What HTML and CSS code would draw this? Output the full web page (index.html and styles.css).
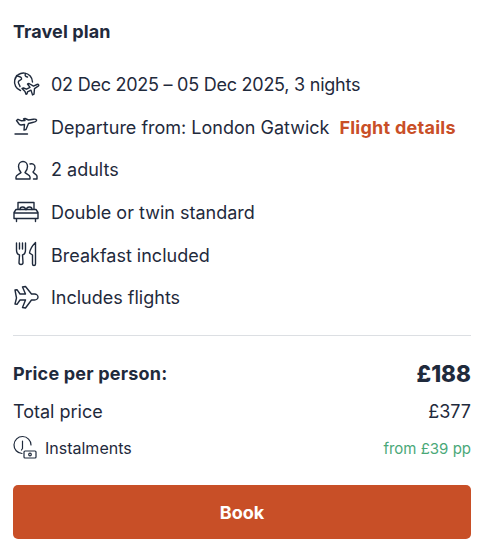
FILE: index.html
```html
<!DOCTYPE html>
<html lang="en">
<head>
<meta charset="utf-8">
<title>Travel plan</title>
<link rel="stylesheet" href="styles.css">
</head>
<body>
<main class="card">
  <h2 class="title">Travel plan</h2>
  <ul class="facts">
    <li class="fact fact-date">
      <svg class="icon" viewBox="0 0 32 32"><path d="M10.500 21.500A9 9 0 1 1 22.500 13"/><path d="M6.500 6.500c2 1.500 4 .5 5 2.500s-2 2-3 3.500 1 3 1.500 5M15.500 4.500c-1 2 0 3 2 3.500"/><path d="M12 19.500l1.500-.5 3 1.200 3.500-1.800-2.500-3.400 1.500-.5 4.500 2.600 3.500-1.600c1.500-.6 2.500.8 1.200 1.700l-3.700 2.400-.5 5.500-1.500.8-1.500-4.800-3.500 1.800-.5 2-1 .4-1-2.800z"/></svg>
      <span>02 Dec 2025 – 05 Dec 2025, 3 nights</span>
    </li>
    <li class="fact">
      <svg class="icon" viewBox="0 0 32 32"><path d="M5 23h12.500"/><path d="M6.500 9.500L8 8.300l3.500 1.500 3.500-.3-1.500-1.500 1.500-.5 3.500 1.500 5-.8c2-.3 3.500.5 3 1.500s-2.500 1.500-4 1.800l-4 1-2.500 6-2 .5.500-5.500-3.500.5c-1 0-1.500-.5-2-1z"/></svg>
      <span>Departure from: London Gatwick</span>
      <a class="link" href="#">Flight details</a>
    </li>
    <li class="fact">
      <svg class="icon" viewBox="0 0 32 32"><path d="M6 25v-2c0-2 4-3 5-4.500-1.500-1.500-2.500-3.500-2.500-6 0-3 2-5 4.500-5s4.500 2 4.500 5c0 2.500-1 4.500-2.500 6 1 1.500 5 2.500 5 4.500v2z"/><path d="M20 10c2.500-1 5 .5 5 3.500 0 2-1 3.500-2 4.500.5 1.500 4 2.500 4 4v3h-3.500"/></svg>
      <span>2 adults</span>
    </li>
    <li class="fact">
      <svg class="icon" viewBox="0 0 32 32"><path d="M8 12V5.500h16V12M10 12.500c0-3 5-3.500 5.500 0M16.500 12.500c.5-3.500 5.500-3 5.500 0"/><path d="M6 12.500h20l2 3v6H4v-6zM4 16h24M6.500 21.500v3M25.500 21.500v3"/></svg>
      <span>Double or twin standard</span>
    </li>
    <li class="fact">
      <svg class="icon" viewBox="0 0 32 32"><path d="M6.500 4v7c0 3 1.500 4.500 3 5l-.5 7.500a2 2 0 0 0 4 0L12.500 16c1.500-.5 3-2 3-5V4M9.500 4v6M12.500 4v6"/><path d="M25.500 3.500c-3 3-5.500 7-6 10.500l3 2v9a1.500 1.500 0 0 0 3 0z"/></svg>
      <span>Breakfast included</span>
    </li>
    <li class="fact">
      <svg class="icon" viewBox="0 0 32 32"><path d="M5 8l2-.3 3 4.300h5.500L12.500 5l3-.5 6 7.500h3c2 0 3.500 1.500 3.500 3s-1.500 3-3.500 3h-3l-6 8-3-.5 3-7.500H10l-3 4.300-2-.3 1.500-6z"/></svg>
      <span>Includes flights</span>
    </li>
  </ul>
  <hr class="divider">
  <div class="row row-main">
    <strong class="main-label">Price per person:</strong>
    <strong class="main-price">£188</strong>
  </div>
  <div class="row row-total">
    <span>Total price</span>
    <span>£377</span>
  </div>
  <div class="row row-inst">
    <span class="inst-label">
      <svg class="icon-small" viewBox="0 0 32 28"><path d="M12 19.500A8.500 8.500 0 1 1 21 11"/><path d="M12.500 7v7.500l-1 1.500"/><rect x="14" y="17" width="12" height="7" rx="1"/><circle cx="20" cy="20.500" r="1.300"/></svg>
      Instalments
    </span>
    <span class="green">from £39 pp</span>
  </div>
  <button class="book" type="button">Book</button>
</main>
</body>
</html>
```
FILE: styles.css
```css
* { box-sizing: border-box; }
html, body { margin: 0; padding: 0; background: #fff; }
body {
  font-family: Inter, "Noto Sans", sans-serif;
  color: #1f2a3c;
  font-size: 18px;
}
.card { width: 484px; height: 556px; padding: 19px 13px 0; }
.title { margin: 0; font-size: 18px; font-weight: 700; line-height: 25px; letter-spacing: 0.1px; }
.facts { list-style: none; margin: 19.500px 0 0; padding: 0; }
.fact {
  display: flex;
  align-items: center;
  height: 42.600px;
  font-size: 18px;
  white-space: nowrap;
}
.fact-date { letter-spacing: -0.25px; }
.icon {
  width: 32px;
  height: 32px;
  flex: none;
  margin: 0 9px 0 -3px;
  fill: none;
  stroke: #1f2a3c;
  stroke-width: 1.400;
  stroke-linejoin: round;
  stroke-linecap: round;
}
.link {
  margin-left: 10px;
  color: #c94f27;
  font-weight: 700;
  letter-spacing: 0.25px;
  text-decoration: none;
}
.divider { margin: 16px 0 0; border: 0; border-top: 1px solid #dcdfe3; }
.row { display: flex; justify-content: space-between; align-items: center; }
.row-main { margin-top: 19px; height: 36px; }
.main-label { font-size: 18px; font-weight: 700; letter-spacing: 0.2px; }
.main-price { font-size: 22.500px; font-weight: 800; }
.row-total { margin-top: 5px; height: 30px; font-size: 18px; }
.row-inst { margin-top: 7px; height: 30px; }
.inst-label { display: flex; align-items: center; gap: 3px; font-size: 16px; }
.icon-small {
  width: 32px;
  height: 28px;
  margin-left: -3px;
  fill: none;
  stroke: #1f2a3c;
  stroke-width: 1.200;
  stroke-linecap: round;
  stroke-linejoin: round;
}
.green { color: #4aa878; font-size: 15px; }
.book {
  display: block;
  width: 100%;
  height: 54px;
  margin-top: 22px;
  border: 0;
  border-radius: 5px;
  background: #c84f27;
  color: #fff;
  font: 700 18px Inter, sans-serif;
}
```
